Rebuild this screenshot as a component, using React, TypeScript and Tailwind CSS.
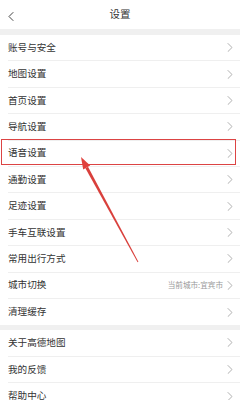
const groupA = [
  '账号与安全',
  '地图设置',
  '首页设置',
  '导航设置',
  '语音设置',
  '通勤设置',
  '足迹设置',
  '手车互联设置',
  '常用出行方式',
  '城市切换',
  '清理缓存',
]

const groupB = ['关于高德地图', '我的反馈', '帮助中心']

function Chevron({ left, className }: { left?: boolean; className?: string }) {
  return (
    <svg width="6" height="9" viewBox="0 0 6 9" className={className} fill="none">
      <polyline
        points={left ? '5,0.5 1,4.5 5,8.5' : '1,0.5 5,4.5 1,8.5'}
        stroke="currentColor"
        strokeWidth="1"
        strokeLinecap="round"
        strokeLinejoin="round"
      />
    </svg>
  )
}

function Row({ label, extra, highlight, last }: { label: string; extra?: string; highlight?: boolean; last?: boolean }) {
  return (
    <div className="relative h-[26.4px] bg-white pl-[8px]">
      <div
        className={
          'flex h-full items-center justify-between pr-[7px] ' + (last ? '' : 'border-b border-[#efefef]')
        }
      >
        <span className="text-[9.6px] leading-none text-[#333333]">{label}</span>
        <span className="flex items-center gap-[4px]">
          {extra && <span className="text-[7.6px] leading-none text-[#9a9a9a]">{extra}</span>}
          <Chevron className="text-[#b0b0b0]" />
        </span>
      </div>
      {highlight && (
        <div className="pointer-events-none absolute top-[-1.5px] right-[4px] bottom-[1.5px] left-[1px] border-[1.5px] border-[#dc4444]" />
      )}
    </div>
  )
}

export default function App() {
  return (
    <div
      className="relative h-[400px] w-[240px] overflow-hidden bg-[#f0f0f0]"
      style={{ fontFamily: '"Noto Sans CJK SC", "Noto Sans", sans-serif' }}
    >
      {/* header */}
      <div className="relative flex h-[29px] items-center justify-center bg-white">
        <Chevron left className="absolute top-[12px] left-[8px] text-[#444444]" />
        <span className="text-[10.5px] leading-none text-[#333333]">设置</span>
      </div>

      <div className="mt-[6px]">
        {groupA.map((l, i) => (
          <Row
            key={l}
            label={l}
            extra={l === '城市切换' ? '当前城市:宜宾市' : undefined}
            highlight={l === '语音设置'}
            last={i === groupA.length - 1}
          />
        ))}
      </div>

      <div className="mt-[5px]">
        {groupB.map((l, i) => (
          <Row key={l} label={l} last={i === groupB.length - 1} />
        ))}
      </div>

      {/* annotation arrow */}
      <svg className="pointer-events-none absolute top-0 left-0" width="240" height="400" viewBox="0 0 240 400">
        <polygon points="81,157 90.2,165.6 83.2,169.4" fill="#e0403c" />
        <polygon points="88,166.8 85.4,168.2 137.6,262.2 138.4,261.8" fill="#d9403c" />
      </svg>
    </div>
  )
}
